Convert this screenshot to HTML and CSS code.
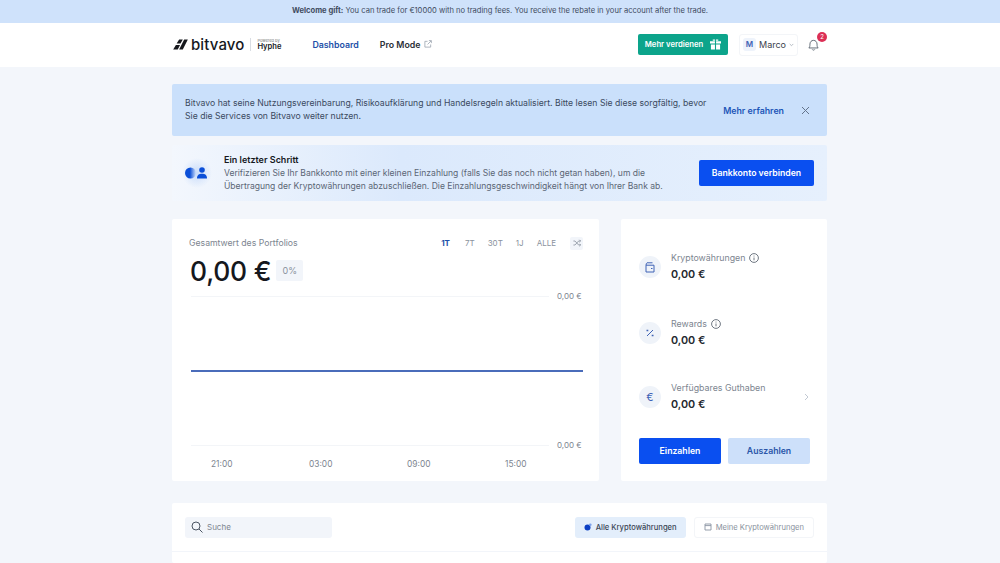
FILE: index.html
```html
<!DOCTYPE html>
<html>
	<head>
		<meta charset="UTF-8">
		<title>Bitvavo Dashboard</title>
		<link rel="stylesheet" href="styles.css">
	</head>
	<body>
		<div class="gift"><b>Welcome gift:</b> You can trade for €10000 with no trading fees. You receive the rebate in your account after the trade.</div>

		<header class="top">
			<div class="wrap top-in">
				<svg class="mark" width="15" height="11" viewBox="0 0 16 12"><path d="M0 11.500L3 6.500H7.500L5 11.500ZM3.800 5L6.500 .5H10.500L8 5ZM6.500 11.500L12 .5H16L10.500 11.500Z" fill="#16181d"/></svg>
				<span class="logo">bitvavo</span>
				<span class="powered"><small>Powered by</small>Hyphe</span>
				<a class="nav nav-on">Dashboard</a>
				<a class="nav">Pro Mode
					<svg width="8" height="8" viewBox="0 0 9 9" fill="none" stroke="#9aa3af" stroke-width=".9"><path d="M4 1.500H1V8H7.500V5M4 5L8 1M5.500 .7H8.300V3.500"/></svg>
				</a>
				<div class="top-right">
					<a class="earn">Mehr verdienen
						<svg width="11" height="11" viewBox="0 0 12 12" fill="#fff"><path d="M0 2.500H5.400V5H0ZM6.600 2.500H12V5H6.600ZM1 6H5.400V11.500H1ZM6.600 6H11V11.500H6.600ZM3 .5H5.500V1.800H3ZM6.500 .5H9V1.800H6.500Z"/></svg>
					</a>
					<a class="user"><span class="avatar">M</span>Marco
						<svg width="5" height="4" viewBox="0 0 7 5" fill="none" stroke="#9aa3af"><path d="M1 1L3.500 3.500L6 1"/></svg>
					</a>
					<a class="bell">
						<svg width="11" height="12" viewBox="0 0 13 14" fill="none" stroke="#4b5563" stroke-width="1"><path d="M1 10.500C2 9.500 2.300 8.500 2.300 6C2.300 3.500 4 1.500 6.500 1.500S10.700 3.500 10.700 6C10.700 8.500 11 9.500 12 10.500ZM5 12.200C5.500 13.300 7.500 13.300 8 12.200"/></svg>
						<span class="badge">2</span>
					</a>
				</div>
			</div>
		</header>

		<main class="wrap">
			<section class="notice">
				<p>Bitvavo hat seine Nutzungsvereinbarung, Risikoaufklärung und Handelsregeln aktualisiert. Bitte lesen Sie diese sorgfältig, bevor Sie die Services von Bitvavo weiter nutzen.</p>
				<a class="more">Mehr erfahren</a>
				<svg class="close" width="9" height="9" viewBox="0 0 9 9" stroke="#64748b" stroke-width="1"><path d="M1 1L8 8M8 1L1 8"/></svg>
			</section>

			<section class="step">
				<svg class="step-icon" width="30" height="30" viewBox="0 0 30 30">
					<defs>
						<radialGradient id="glow"><stop offset="0" stop-color="#c9dcfa"/><stop offset="1" stop-color="#c9dcfa" stop-opacity="0"/></radialGradient>
						<linearGradient id="moon"><stop offset=".45" stop-color="#0b4fd8"/><stop offset="1" stop-color="#0b4fd8" stop-opacity="0"/></linearGradient>
					</defs>
					<circle cx="14" cy="15" r="15" fill="url(#glow)"/>
					<circle cx="7.500" cy="15" r="5.500" fill="url(#moon)"/>
					<circle cx="19" cy="12" r="2.800" fill="#0b4fd8"/>
					<path d="M14 20.500C14 16.800 16 15.700 19 15.700S24 16.800 24 20.500Z" fill="#0b4fd8"/>
				</svg>
				<div class="step-text">
					<h3>Ein letzter Schritt</h3>
					<p>Verifizieren Sie Ihr Bankkonto mit einer kleinen Einzahlung (falls Sie das noch nicht getan haben), um die Übertragung der Kryptowährungen abzuschließen. Die Einzahlungsgeschwindigkeit hängt von Ihrer Bank ab.</p>
				</div>
				<a class="btn btn-blue btn-bank">Bankkonto verbinden</a>
			</section>

			<div class="cols">
				<section class="card chart-card">
					<div class="chart-head">
						<span class="muted">Gesamtwert des Portfolios</span>
						<div class="ranges">
							<a class="on">1T</a><a>7T</a><a>30T</a><a>1J</a><a class="all">ALLE</a>
							<span class="swap">
								<svg width="8" height="8" viewBox="0 0 10 10" fill="none" stroke="#7d8794" stroke-width=".9"><path d="M.5 2.500H2.500L7 7.500H9.500M.5 7.500H2.500L7 2.500H9.500M8 1L9.500 2.500L8 4M8 6L9.500 7.500L8 9"/></svg>
							</span>
						</div>
					</div>
					<div class="total"><strong>0,00 €</strong><span class="pct">0%</span></div>
					<div class="chart">
						<div class="row"><i></i><span>0,00 €</span></div>
						<div class="row row-mid"><i></i></div>
						<div class="row"><i></i><span>0,00 €</span></div>
					</div>
					<div class="times"><span>21:00</span><span>03:00</span><span>09:00</span><span>15:00</span></div>
				</section>

				<section class="card side">
					<div class="item item-a">
						<span class="disc">
							<svg width="10" height="11" viewBox="0 0 10 11" fill="none" stroke="#3f63b5" stroke-width="1"><path d="M2 .8H7.500M1 3.200C1 2 1.500 1.200 2 .8M1 3.200H9V10H1ZM6 6.500H7.500"/></svg>
						</span>
						<div>
							<div class="label">Kryptowährungen <svg class="info" width="10" height="10" viewBox="0 0 10 10" fill="none" stroke="#4b5563" stroke-width=".8"><circle cx="5" cy="5" r="4.400"/><path d="M5 4.500V7.300M5 2.600V3.500"/></svg></div>
							<div class="val">0,00 €</div>
						</div>
					</div>
					<div class="item item-b">
						<span class="disc">
							<svg width="8" height="8" viewBox="0 0 8 8" fill="none" stroke="#3f63b5" stroke-width="1"><path d="M1 7L7 1"/><path d="M.5 1.500H2.300M5.700 6.500H7.500" stroke-width="1.600"/></svg>
						</span>
						<div>
							<div class="label">Rewards <svg class="info" width="10" height="10" viewBox="0 0 10 10" fill="none" stroke="#4b5563" stroke-width=".8"><circle cx="5" cy="5" r="4.400"/><path d="M5 4.500V7.300M5 2.600V3.500"/></svg></div>
							<div class="val">0,00 €</div>
						</div>
					</div>
					<div class="item item-c">
						<span class="disc disc-euro">€</span>
						<div>
							<div class="label">Verfügbares Guthaben</div>
							<div class="val">0,00 €</div>
						</div>
						<svg class="chev" width="5" height="8" viewBox="0 0 5 8" fill="none" stroke="#c2c9d3"><path d="M1 1L4 4L1 7"/></svg>
					</div>
					<div class="side-btns">
						<a class="btn btn-blue">Einzahlen</a>
						<a class="btn btn-pale">Auszahlen</a>
					</div>
				</section>
			</div>

			<section class="card list">
				<div class="list-head">
					<div class="search">
						<svg width="12" height="12" viewBox="0 0 12 12" fill="none" stroke="#4b5563" stroke-width="1"><circle cx="5" cy="5" r="4"/><path d="M8 8L11.500 11.500"/></svg>
						Suche
					</div>
					<div class="tabs">
						<a class="tab tab-on">
							<svg width="8" height="8" viewBox="0 0 8 8"><circle cx="3.500" cy="4.500" r="3" fill="#0b3fc4"/><circle cx="6.300" cy="1.800" r="1.300" fill="#7da2ea"/></svg>
							Alle Kryptowährungen
						</a>
						<a class="tab">
							<svg width="8" height="8" viewBox="0 0 8 8" fill="none" stroke="#8a94a3" stroke-width=".9"><path d="M1 1H7V7H1ZM1 2.600H7"/></svg>
							Meine Kryptowährungen
						</a>
					</div>
				</div>
			</section>
		</main>
	</body>
</html>
```

FILE: styles.css
```css
*{
	margin: 0;
	padding: 0;
	box-sizing: border-box;
}
html,body{
	height: 563px;
	overflow: hidden;
}
body{
	background: #f3f6fb;
	font-family: Inter, "Liberation Sans", sans-serif;
	font-size: 9px;
	color: #16181d;
}
a{
	cursor: pointer;
}
.wrap{
	width: 655px;
	margin-left: 172px;
}

/* banner + header */
.gift{
	height: 23px;
	line-height: 21px;
	background: #cfe2fb;
	text-align: center;
	font-size: 7.600px;
	color: #3f4c5f;
}
.gift b{
	font-weight: 700;
}
.top{
	height: 44px;
	background: #fff;
}
.top-in{
	height: 43px;
	display: flex;
	align-items: center;
}
.mark{
	margin-left: 1px;
	margin-right: 3px;
}
.logo{
	font-size: 15px;
	font-weight: 500;
	letter-spacing: .1px;
	color: #16181d;
}
.powered{
	margin-left: 6px;
	padding-left: 6px;
	border-left: 1px solid #d9dde3;
	font-size: 7.600px;
	font-weight: 600;
	line-height: 8px;
	display: flex;
	flex-direction: column;
	width: 62px;
}
.powered small{
	font-size: 4px;
	line-height: 5px;
	font-weight: 400;
	color: #777;
}
.nav{
	font-size: 8.800px;
	font-weight: 600;
	color: #2b3038;
	margin-right: 21px;
}
.nav-on{
	color: #1d4fa8;
}
.nav svg{
	margin-left: 1px;
}
.top-right{
	margin-left: auto;
	display: flex;
	align-items: center;
	margin-right: 8px;
}
.earn{
	width: 90px;
	height: 21px;
	background: #0ca48b;
	border-radius: 2px;
	color: #fff;
	font-size: 7.700px;
	font-weight: 600;
	display: flex;
	align-items: center;
	justify-content: center;
	gap: 7px;
}
.user{
	width: 59px;
	height: 22px;
	margin-left: 11px;
	border: 1px solid #f3f5f8;
	border-radius: 3px;
	font-size: 9px;
	color: #3c424c;
	display: flex;
	align-items: center;
	padding-left: 3px;
	gap: 3px;
}
.avatar{
	width: 13px;
	height: 13px;
	background: #eef3fb;
	border-radius: 3px;
	color: #3f63b5;
	font-size: 8px;
	font-weight: 600;
	text-align: center;
	line-height: 13px;
}
.bell{
	position: relative;
	margin-left: 10px;
	height: 12px;
}
.badge{
	position: absolute;
	left: 9px;
	top: -7px;
	width: 10px;
	height: 10px;
	border-radius: 50%;
	background: #dc2f55;
	color: #fff;
	font-size: 6px;
	line-height: 10px;
	text-align: center;
}

/* notice + step */
.notice{
	margin-top: 17px;
	height: 52px;
	background: #cae0fb;
	border-radius: 2px;
	display: flex;
	align-items: center;
	padding: 0 17px 0 13px;
	color: #3b4a60;
	font-size: 8.670px;
	line-height: 13px;
}
.notice p{
	width: 530px;
}
.more{
	margin-left: auto;
	font-weight: 600;
	font-size: 8.800px;
	color: #1d56b8;
	white-space: nowrap;
}
.close{
	margin-left: 17px;
	flex: none;
}
.step{
	margin-top: 9px;
	height: 56px;
	background: linear-gradient(90deg, #f3f7fd 0%, #dbe9fc 35%, #e6f0fd 100%);
	border-radius: 2px;
	display: flex;
	align-items: center;
	padding: 0 13px 0 11px;
}
.step-icon{
	margin-right: 11px;
}
.step-text{
	width: 462px;
}
.step-text h3{
	font-size: 9px;
	font-weight: 600;
	line-height: 12px;
	margin-bottom: 1px;
}
.step-text p{
	font-size: 8.550px;
	line-height: 13px;
	color: #5b6675;
}
.btn{
	height: 26px;
	border-radius: 2px;
	font-size: 8.700px;
	font-weight: 600;
	display: flex;
	align-items: center;
	justify-content: center;
}
.btn-blue{
	background: #0a4ff0;
	color: #fff;
}
.btn-pale{
	background: #cde0fa;
	color: #2a55a8;
}
.btn-bank{
	width: 115px;
	margin-left: auto;
}

/* cards */
.cols{
	margin-top: 18px;
	display: flex;
	justify-content: space-between;
}
.card{
	background: #fff;
	border-radius: 2px;
}
.chart-card{
	width: 427px;
	height: 262px;
	padding: 18px 16px 0 17px;
}
.chart-head{
	display: flex;
	justify-content: space-between;
	align-items: center;
	height: 12px;
}
.muted{
	font-size: 8.700px;
	color: #7d8590;
}
.ranges{
	display: flex;
	align-items: center;
	font-size: 8px;
	color: #8a929d;
}
.ranges a{
	margin-right: 13px;
}
.ranges a.on{
	color: #1d4fa8;
	font-weight: 700;
	margin-right: 15px;
}
.ranges a.all{
	margin-right: 14px;
}
.swap{
	width: 13px;
	height: 13px;
	background: #f2f5fa;
	border-radius: 2px;
	display: flex;
	align-items: center;
	justify-content: center;
}
.total{
	margin-top: 10px;
	display: flex;
	align-items: center;
	height: 24px;
}
.total strong{
	font-size: 26.400px;
	font-weight: 500;
	letter-spacing: -.2px;
	margin-left: 1px;
}
.pct{
	margin-left: 5px;
	margin-bottom: 2px;
	width: 27px;
	height: 21px;
	background: #f2f5fa;
	border-radius: 2px;
	color: #8a929d;
	font-size: 9px;
	line-height: 21px;
	text-align: center;
}
.chart{
	margin-top: 7px;
	height: 161px;
	display: flex;
	flex-direction: column;
	justify-content: space-between;
}
.row{
	height: 12px;
	display: flex;
	align-items: center;
	font-size: 8px;
	color: #7d8590;
}
.row i{
	flex: none;
	width: 358px;
	height: 1px;
	margin-left: 2px;
	background: #f3f5f8;
	margin-right: 8px;
}
.row span{
	white-space: nowrap;
}
.row-mid i{
	width: 392px;
	height: 2px;
	background: #4a6cba;
}
.times{
	margin-top: 8px;
	display: flex;
	padding-left: 22px;
	font-size: 8.400px;
	color: #7d8590;
}
.times span{
	flex: none;
	width: 98px;
}
.side{
	width: 206px;
	height: 262px;
	padding: 0 17px 0 18px;
	display: flex;
	flex-direction: column;
}
.item{
	display: flex;
	align-items: center;
	gap: 10px;
}
.item-a{
	margin-top: 33px;
}
.item-b{
	margin-top: 36px;
}
.item-c{
	margin-top: 34px;
}
.disc{
	width: 22px;
	height: 22px;
	border-radius: 50%;
	background: #eff3f9;
	display: flex;
	align-items: center;
	justify-content: center;
	flex: none;
}
.disc-euro{
	color: #3f63b5;
	font-size: 11px;
}
.label{
	font-size: 8.800px;
	line-height: 12px;
	color: #7d8590;
	display: flex;
	align-items: center;
	gap: 4px;
}
.val{
	margin-top: 3px;
	font-size: 10.800px;
	line-height: 15px;
	font-weight: 600;
	color: #23272e;
}
.chev{
	margin-left: auto;
	margin-right: 1px;
}
.side-btns{
	margin-top: 26px;
	display: flex;
	justify-content: space-between;
}
.side-btns .btn{
	width: 82px;
}
.list{
	margin-top: 22px;
	height: 60px;
}
.list-head{
	height: 49px;
	border-bottom: 1px solid #f2f5fa;
	display: flex;
	align-items: center;
	justify-content: space-between;
	padding: 0 13px;
}
.search{
	width: 147px;
	height: 21px;
	background: #f2f5fa;
	border-radius: 3px;
	padding-left: 6px;
	display: flex;
	align-items: center;
	gap: 4px;
	font-size: 8px;
	color: #7d8590;
}
.tabs{
	display: flex;
	gap: 8px;
}
.tab{
	height: 21px;
	padding: 0 9px;
	border: 1px solid #f3f5f8;
	border-radius: 3px;
	display: flex;
	align-items: center;
	gap: 4px;
	font-size: 7.600px;
	color: #8a929d;
}
.tab-on{
	border: none;
	background: #e3eefb;
	color: #3b4656;
	font-weight: 500;
}
```
